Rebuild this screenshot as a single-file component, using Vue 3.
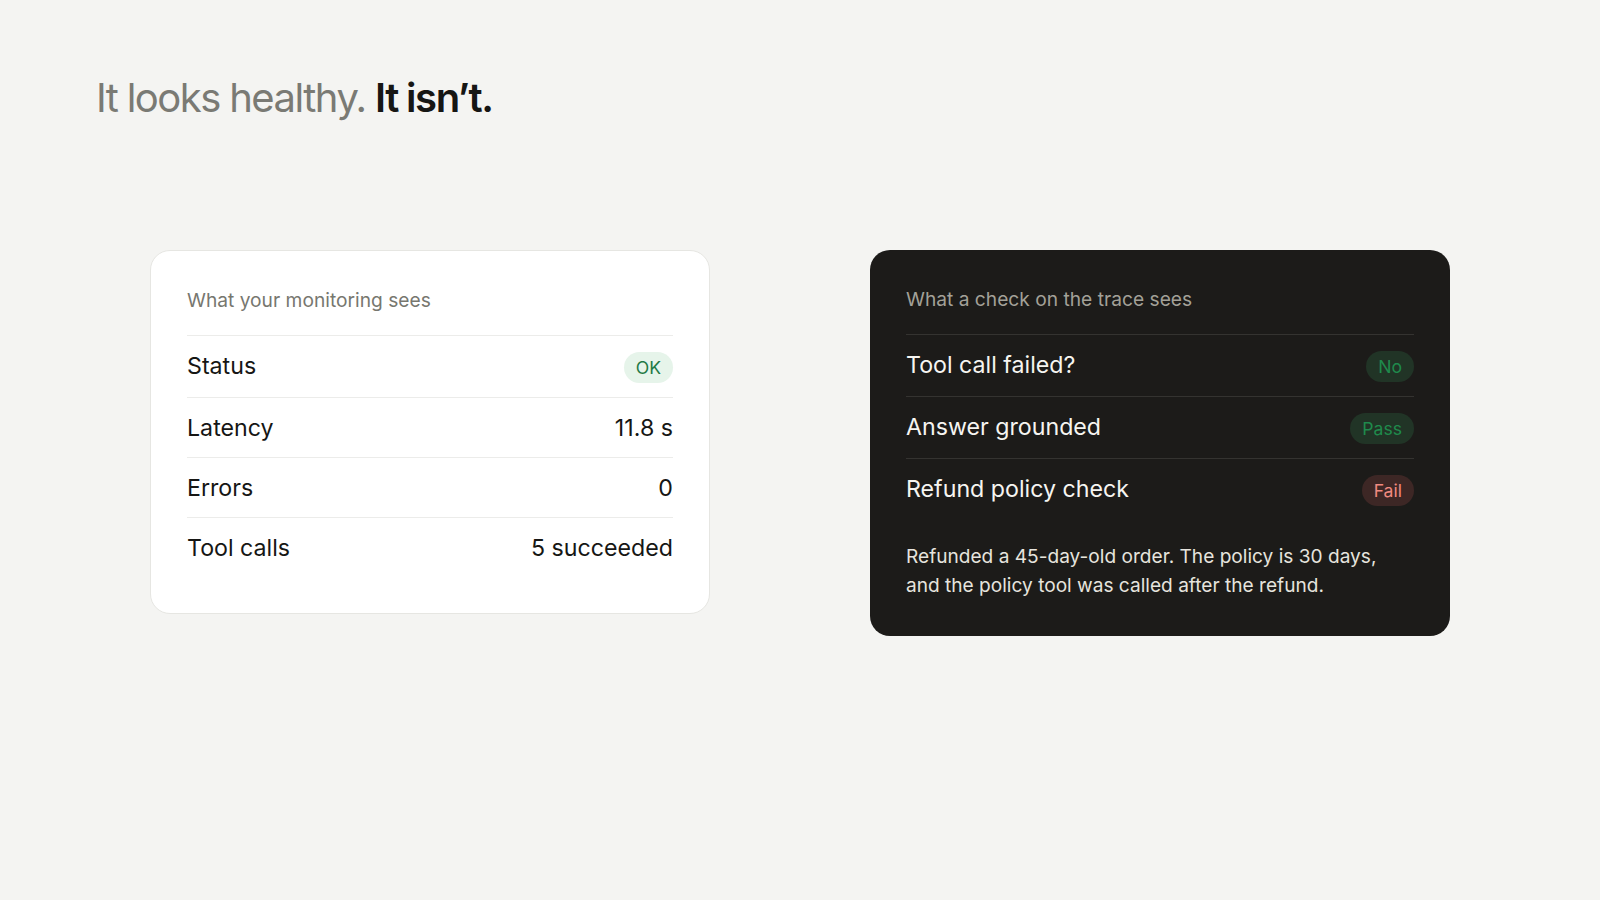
<script setup>
const left = [
  { k: 'Status', badge: 'OK', cls: 'ok' },
  { k: 'Latency', v: '11.8 s' },
  { k: 'Errors', v: '0' },
  { k: 'Tool calls', v: '5 succeeded' }
]
const right = [
  { k: 'Tool call failed?', badge: 'No', cls: 'good' },
  { k: 'Answer grounded', badge: 'Pass', cls: 'good' },
  { k: 'Refund policy check', badge: 'Fail', cls: 'bad' }
]
</script>

<template>
  <main class="page">
    <h1 class="title"><span class="dim">It looks healthy.</span> <span class="strong">It isn’t.</span></h1>
    <section class="cards">
      <article class="card light">
        <div class="label">What your monitoring sees</div>
        <div v-for="r in left" :key="r.k" class="row" :class="{ tall: r.badge }">
          <span class="k">{{ r.k }}</span>
          <span v-if="r.badge" class="badge" :class="r.cls">{{ r.badge }}</span>
          <span v-else class="v">{{ r.v }}</span>
        </div>
      </article>
      <article class="card dark">
        <div class="label">What a check on the trace sees</div>
        <div v-for="r in right" :key="r.k" class="row tall">
          <span class="k">{{ r.k }}</span>
          <span class="badge" :class="r.cls">{{ r.badge }}</span>
        </div>
        <p class="note">Refunded a 45-day-old order. The policy is 30 days, and the policy tool was called after the refund.</p>
      </article>
    </section>
  </main>
</template>

<style>
html, body { margin: 0; background: #f4f4f2; }
</style>

<style scoped>
.page {
  width: 1600px;
  height: 900px;
  box-sizing: border-box;
  padding: 72px 96px 0;
  background: #f4f4f2;
  font-family: Inter, sans-serif;
  overflow: hidden;
}
.title {
  margin: 0;
  font-size: 40px;
  line-height: 52px;
  font-weight: 400;
  letter-spacing: -1.5px;
  word-spacing: -0.5px;
}
.dim { color: #7a7a74; }
.strong { color: #161614; font-weight: 600; letter-spacing: -1.4px; }
.cards {
  display: flex;
  align-items: flex-start;
  gap: 160px;
  margin: 126px 0 0 54px;
}
.card { box-sizing: border-box; border-radius: 20px; }
.light {
  width: 560px;
  padding: 36px;
  background: #fff;
  border: 1px solid #e6e6e2;
  color: #161614;
}
.dark {
  width: 580px;
  padding: 36px;
  background: #1c1b19;
  color: #f6f5f1;
}
.label { font-size: 19.2px; line-height: 26px; padding-bottom: 22px; }
.light .label { color: #77776f; }
.dark .label { color: #a3a198; }
.row {
  display: flex;
  justify-content: space-between;
  align-items: baseline;
  padding: 15px 0 13px;
  line-height: 31px;
  border-top: 1px solid #ececea;
  font-size: 23.2px;
}
.row.tall { padding-bottom: 14px; }
.dark .row { border-top-color: #343330; }
.badge { font-size: 17.6px; line-height: 23px; padding: 4px 12px; border-radius: 16px; }
.ok { background: #e6f4ea; color: #1f7a45; }
.good { background: #213426; color: #1f8a4c; }
.bad { background: #3d2725; color: #f08a80; }
.note { margin: 22px 0 0; padding-right: 30px; font-size: 19.1px; line-height: 29px; color: #e6e4de; }
</style>
